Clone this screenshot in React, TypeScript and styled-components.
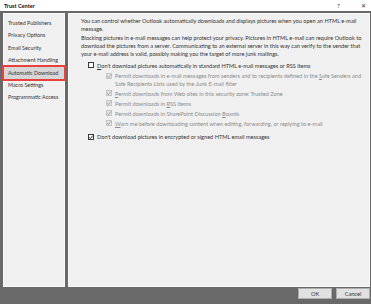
import styled, { createGlobalStyle } from 'styled-components'

const GlobalStyle = createGlobalStyle`
  html, body { margin: 0; padding: 0; }
  body {
    font-family: Lato, 'Open Sans', 'Liberation Sans', sans-serif;
    background: #696969;
  }
`

const navItems = [
  'Trusted Publishers',
  'Privacy Options',
  'Email Security',
  'Attachment Handling',
  'Automatic Download',
  'Macro Settings',
  'Programmatic Access',
]

function Check({ checked, disabled }: { checked?: boolean; disabled?: boolean }) {
  return (
    <Box $disabled={disabled}>
      {checked && (
        <svg width="6" height="6" viewBox="0 0 6 6">
          <path d="M1 3.2 L2.4 4.6 L5 1.4" fill="none" stroke={disabled ? '#9a9a9a' : '#222'} strokeWidth="0.9" />
        </svg>
      )}
    </Box>
  )
}

export default function App() {
  return (
    <Window>
      <GlobalStyle />
      <TitleBar>
        <Title>Trust Center</Title>
        <TitleIcons>
          <span>?</span>
          <Close>✕</Close>
        </TitleIcons>
      </TitleBar>
      <Body>
        <Sidebar>
          {navItems.map((item) => (
            <NavItem key={item} $active={item === 'Automatic Download'}>{item}</NavItem>
          ))}
        </Sidebar>
        <Main>
          <Para>
            <Line>You can control whether Outlook automatically downloads and displays pictures when you open an HTML e-mail</Line>
            <Line>message.</Line>
          </Para>
          <Para $mt={1}>
            <Line>Blocking pictures in e-mail messages can help protect your privacy. Pictures in HTML e-mail can require Outlook to</Line>
            <Line>download the pictures from a server. Communicating to an external server in this way can verify to the sender that</Line>
            <Line>your e-mail address is valid, possibly making you the target of more junk mailings.</Line>
          </Para>
          <Option $mt={4} $indent={7}>
            <Check />
            <Line><u>D</u>on't download pictures automatically in standard HTML e-mail messages or RSS items</Line>
          </Option>
          <Option $mt={3} $indent={25} $disabled>
            <Check checked disabled />
            <div>
              <Line>Permit downloads in e-mail messages from senders and to recipients defined in the <u>S</u>afe Senders and</Line>
              <Line>Safe Recipients Lists used by the Junk E-mail filter</Line>
            </div>
          </Option>
          <Option $mt={2.5} $indent={25} $disabled>
            <Check checked disabled />
            <Line><u>P</u>ermit downloads from Web sites in this security zone: Trusted Zone</Line>
          </Option>
          <Option $mt={2.5} $indent={25} $disabled>
            <Check checked disabled />
            <Line>Permit downloads in <u>R</u>SS items</Line>
          </Option>
          <Option $mt={2.5} $indent={25} $disabled>
            <Check checked disabled />
            <Line>Permit downloads in SharePoint Discussion <u>B</u>oards</Line>
          </Option>
          <Option $mt={2.5} $indent={25} $disabled>
            <Check checked disabled />
            <Line><u>W</u>arn me before downloading content when editing, forwarding, or replying to e-mail</Line>
          </Option>
          <Option $mt={6} $indent={7}>
            <Check checked />
            <Line>Don't download pictures in encrypted or signed HTML email messages</Line>
          </Option>
        </Main>
      </Body>
      <Footer>
        <Button>OK</Button>
        <Button>Cancel</Button>
      </Footer>
    </Window>
  )
}

const Window = styled.div`
  width: 371px;
  height: 304px;
  display: flex;
  flex-direction: column;
  background: #696969;
  overflow: hidden;
`

const TitleBar = styled.div`
  height: 11px;
  background: #ffffff;
  display: flex;
  align-items: center;
  justify-content: space-between;
  padding: 0 5px 0 4px;
  font-size: 5.6px;
  color: #111;
`

const Title = styled.span`
  font-weight: 700;
`

const TitleIcons = styled.div`
  display: flex;
  gap: 21px;
  font-size: 6.5px;
  color: #333;
`

const Close = styled.span`
  font-size: 6px;
`

const Body = styled.div`
  flex: 1;
  display: flex;
  gap: 3px;
  padding: 2px 1px 0 3px;
`

const Sidebar = styled.div`
  width: 62px;
  background: #f0f0f0;
  border: 1px solid #fafafa;
  box-sizing: border-box;
  padding-top: 3px;
  display: flex;
  flex-direction: column;
`

const NavItem = styled.div<{ $active?: boolean }>`
  height: 12.4px;
  line-height: 12.4px;
  padding-left: 4px;
  font-size: 5.4px;
  color: #333;
  white-space: nowrap;
  background: ${(p) => (p.$active ? '#d6d6d6' : 'transparent')};
  outline: ${(p) => (p.$active ? '2px solid #e8413c' : 'none')};
  outline-offset: 0;
`

const Main = styled.div`
  flex: 1;
  background: #f0f0f0;
  border: 1px solid #fafafa;
  box-sizing: border-box;
  padding: 2.5px 6px 0 12px;
  font-size: 5.6px;
  color: #333;
`

const Para = styled.div<{ $mt?: number }>`
  margin-top: ${(p) => p.$mt ?? 0}px;
  line-height: 8px;
`

const Line = styled.div`
  white-space: nowrap;
`

const Option = styled.div<{ $mt: number; $indent: number; $disabled?: boolean }>`
  display: flex;
  align-items: flex-start;
  gap: 3px;
  margin-top: ${(p) => p.$mt}px;
  padding-left: ${(p) => p.$indent}px;
  line-height: 7.5px;
  color: ${(p) => (p.$disabled ? '#8c8c8c' : '#333')};
  u { text-decoration-thickness: 0.5px; }
`

const Box = styled.span<{ $disabled?: boolean }>`
  flex: none;
  position: relative;
  width: 6px;
  height: 6px;
  margin-top: 0.5px;
  box-sizing: border-box;
  border: 1px solid ${(p) => (p.$disabled ? '#c4c4c4' : '#3a3a3a')};
  background: ${(p) => (p.$disabled ? '#e4e4e4' : '#ffffff')};
  display: flex;
  align-items: center;
  justify-content: center;
  svg { position: absolute; }
`

const Footer = styled.div`
  height: 16px;
  display: flex;
  justify-content: flex-end;
  align-items: flex-start;
  gap: 4px;
  padding: 1px 1px 0 0;
`

const Button = styled.button`
  width: 34px;
  height: 11px;
  padding: 0;
  background: #e1e1e1;
  border: 1px solid #adadad;
  font-family: inherit;
  font-size: 5.6px;
  color: #333;
`
